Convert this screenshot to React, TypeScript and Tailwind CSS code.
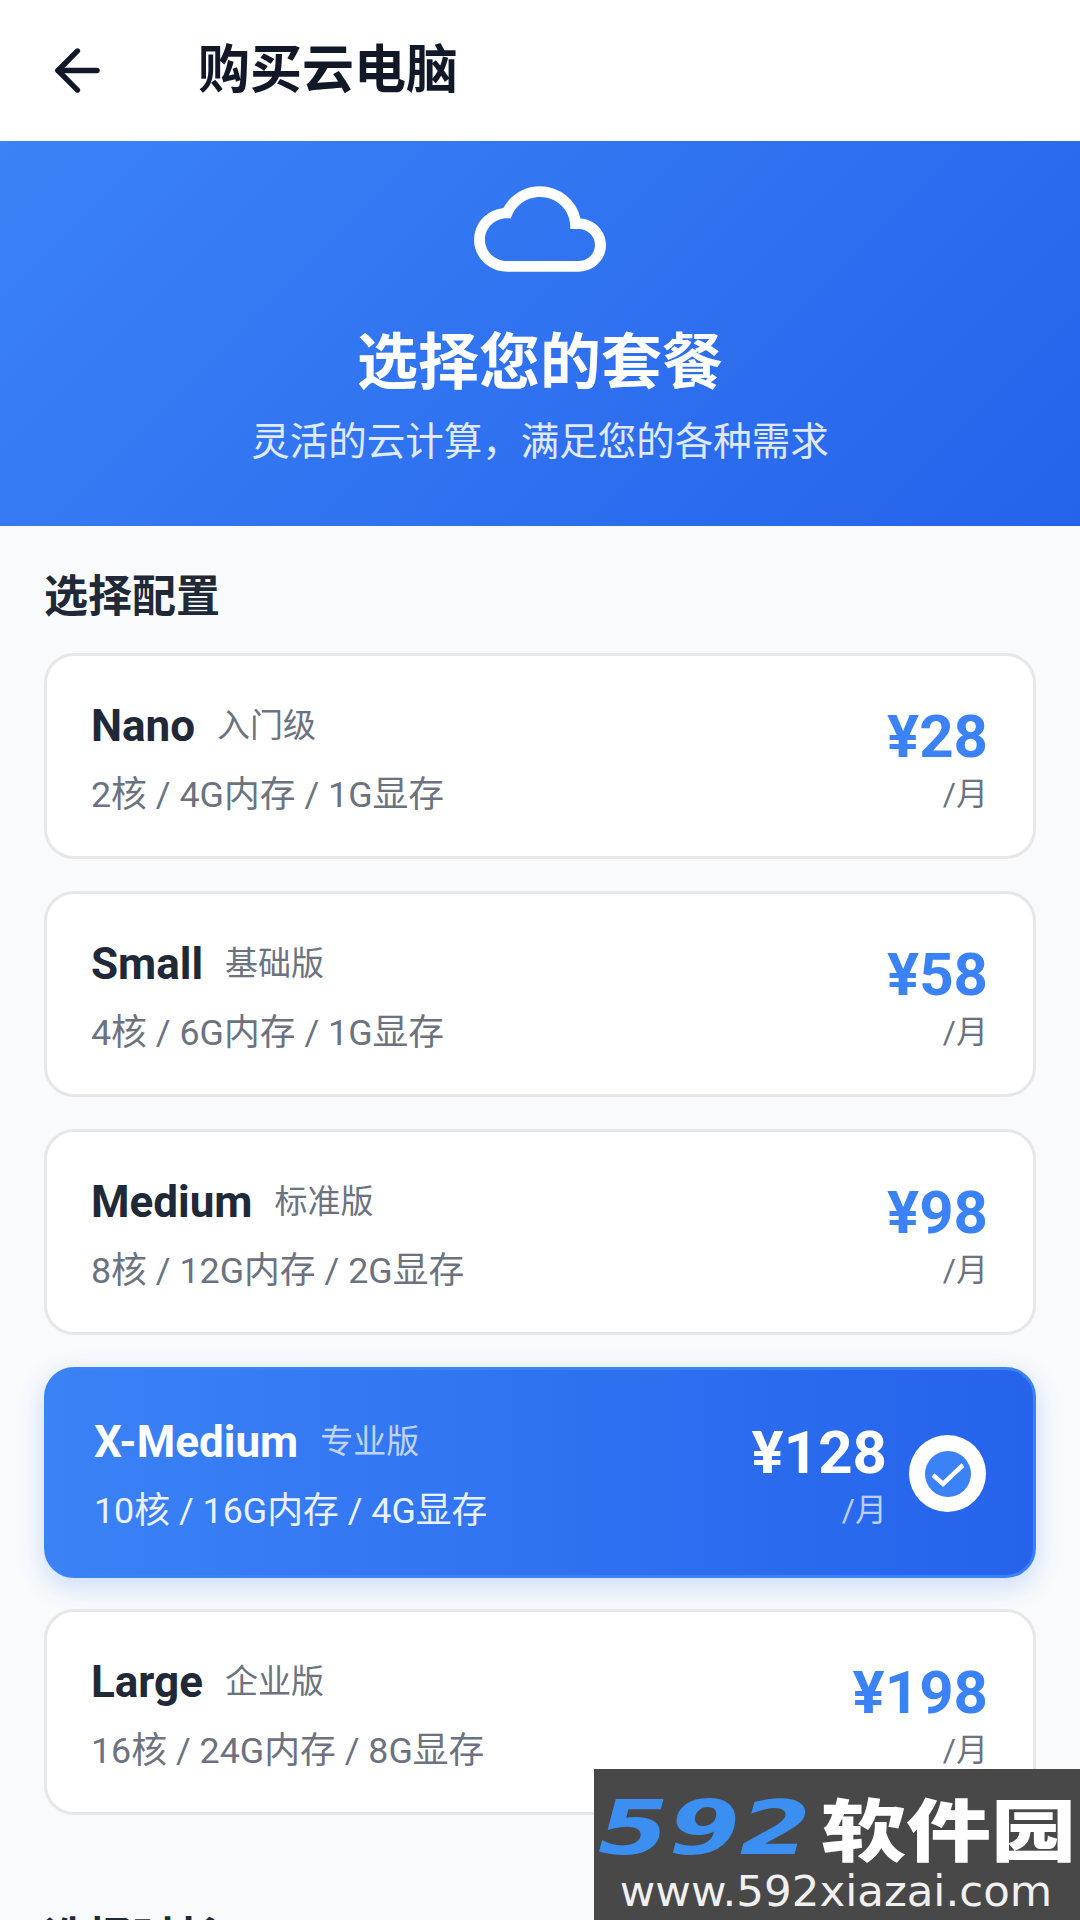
import { ArrowLeft } from 'lucide-react';
import { MdCloudQueue } from 'react-icons/md';

interface Plan {
  name: string;
  tag: string;
  spec: string;
  price: string;
  selected?: boolean;
}

const plans: Plan[] = [
  { name: 'Nano', tag: '入门级', spec: '2核 / 4G内存 / 1G显存', price: '¥28' },
  { name: 'Small', tag: '基础版', spec: '4核 / 6G内存 / 1G显存', price: '¥58' },
  { name: 'Medium', tag: '标准版', spec: '8核 / 12G内存 / 2G显存', price: '¥98' },
  { name: 'X-Medium', tag: '专业版', spec: '10核 / 16G内存 / 4G显存', price: '¥128', selected: true },
  { name: 'Large', tag: '企业版', spec: '16核 / 24G内存 / 8G显存', price: '¥198' },
];

const fontStack = 'font-[Roboto,"Noto_Sans_CJK_SC",sans-serif]';

function PlanCard({ plan }: { plan: Plan }) {
  const on = plan.selected;
  return (
    <div
      className={`flex items-center justify-between rounded-[30px] border-[3px] pt-[6px] ${
        on
          ? 'mb-[-1px] h-[211px] border-[#3b82f6] bg-gradient-to-r from-[#3b82f6] to-[#2563eb] pr-[47px] pl-[47px] shadow-[0_8px_24px_rgba(59,130,246,0.25)]'
          : 'h-[206px] border-[#e5e7eb] bg-white pr-[45px] pl-[44px]'
      }`}
    >
      <div>
        <div className="flex items-center">
          <span className={`text-[44px] leading-[48px] font-bold ${on ? 'text-white' : 'text-[#1f2937]'}`}>
            {plan.name}
          </span>
          <span className={`ml-[22px] text-[33px] leading-[48px] ${on ? 'text-white/70' : 'text-[#6b7280]'}`}>
            {plan.tag}
          </span>
        </div>
        <p className={`mt-[23px] text-[35.8px] leading-[44px] ${on ? 'text-white/90' : 'text-[#6b7280]'}`}>
          {plan.spec}
        </p>
      </div>
      <div className="flex items-center">
        <div className="text-right">
          <p className={`text-[60px] leading-[64px] font-bold ${on ? 'text-white' : 'text-[#3b82f6]'}`}>
            {plan.price}
          </p>
          <p className={`mt-[5px] text-[32px] leading-[40px] ${on ? 'text-white/70' : 'text-[#6b7280]'}`}>/月</p>
        </div>
        {on && (
          <div className="-mt-[4px] ml-[22px] flex h-[77px] w-[77px] items-center justify-center rounded-full bg-white">
            <svg width="46" height="46" viewBox="0 0 46 46">
              <circle cx="23" cy="23" r="23" fill="#3b82f6" />
              <path d="M8 24l10 9 20-19" fill="none" stroke="#fff" strokeWidth="4.5" />
            </svg>
          </div>
        )}
      </div>
    </div>
  );
}

function Watermark() {
  return (
    <div className="absolute right-0 bottom-0 h-[151px] w-[486px] bg-[#484848] pt-[26px] pl-[9px]">
      <div className="flex h-[66px] items-center">
        <div className="flex w-[202px] justify-center">
          <span className="inline-block scale-x-[1.38] text-[74px] leading-[66px] font-bold text-[#3b8ff0] italic font-['DejaVu_Sans']">
            592
          </span>
        </div>
        <div className="ml-[16px] w-[251px]">
          <span className="inline-block origin-left scale-x-[1.25] text-[68px] leading-[66px] font-black text-white font-['Noto_Sans_CJK_SC']">
            软件园
          </span>
        </div>
      </div>
      <p className="mt-[8px] w-[466px] text-center text-[43.5px] leading-[44px] text-[#f0f0f0] font-['DejaVu_Sans']">
        www.592xiazai.com
      </p>
    </div>
  );
}

export default function App() {
  return (
    <div className={`relative h-[1920px] w-[1080px] overflow-hidden bg-[#f8fafc] ${fontStack}`}>
      <header className="flex h-[141px] items-center bg-white pl-[44px]">
        <ArrowLeft size={67} strokeWidth={1.9} className="text-[#111827]" />
        <h1 className="ml-[87px] text-[52px] font-bold text-[#111827]">购买云电脑</h1>
      </header>

      <section className="flex h-[385px] flex-col items-center bg-[linear-gradient(135deg,#3b82f6,#2563eb)] pt-[24px] text-white">
        <MdCloudQueue preserveAspectRatio="none" className="h-[128px] w-[132px]" />
        <h2 className="mt-[28px] text-[61px] leading-[84px] font-bold">选择您的套餐</h2>
        <p className="mt-[12px] text-[38.5px] leading-[50px] text-white/85">灵活的云计算，满足您的各种需求</p>
      </section>

      <main className="px-[44px]">
        <h3 className="mt-[41px] mb-[26px] text-[44px] leading-[60px] font-bold text-[#1f2937]">选择配置</h3>
        <div className="flex flex-col gap-[32px]">
          {plans.map((plan) => (
            <PlanCard key={plan.name} plan={plan} />
          ))}
        </div>
        <h3 className="mt-[94px] text-[44px] leading-[60px] font-bold text-[#1f2937]">选择时长</h3>
      </main>

      <Watermark />
    </div>
  );
}
